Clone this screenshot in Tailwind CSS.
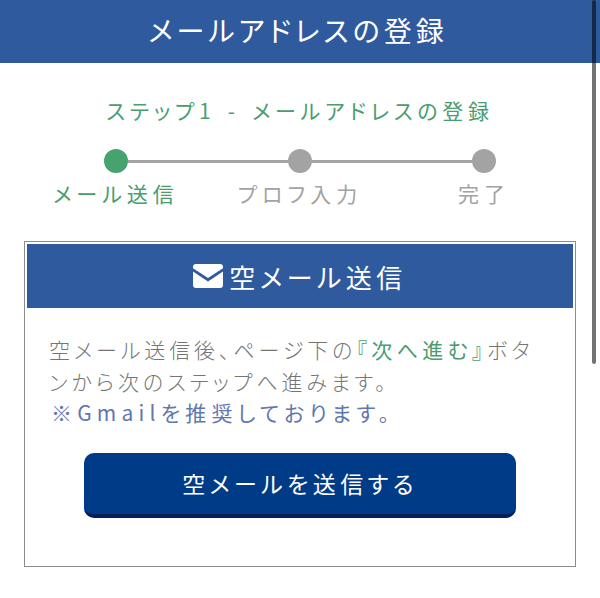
<!doctype html>
<html lang="ja">
	<head>
		<meta charset="UTF-8">
		<meta content="width=device-width, initial-scale=1" name="viewport">
		<title>メールアドレスの登録</title>
		<script src="https://cdn.jsdelivr.net/npm/@tailwindcss/browser@4"></script>
	</head>
	<body class="relative h-[598px] overflow-hidden bg-white font-['Noto_Sans_CJK_JP',sans-serif] [font-feature-settings:'palt']">
		<!-- ヘッダー -->
		<header class="flex h-[63px] items-center justify-center bg-[#2f5a9e] pr-[4px] pb-[3px] text-[28px] font-normal tracking-[4px] text-white">メールアドレスの登録</header>

		<!-- ステップ -->
		<p class="mt-[32px] text-center text-[21px] leading-[30px] font-normal tracking-[4.7px] text-[#4a9d6f] [word-spacing:3px]">ステップ1 - メールアドレスの登録</p>
		<div class="mx-auto mt-[24px] flex h-[24px] w-[392px] items-center">
			<span class="size-[24px] shrink-0 rounded-full bg-[#46a36e]"></span>
			<span class="h-[3px] grow bg-[#a3a3a3]"></span>
			<span class="size-[24px] shrink-0 rounded-full bg-[#a3a3a3]"></span>
			<span class="h-[3px] grow bg-[#a3a3a3]"></span>
			<span class="size-[24px] shrink-0 rounded-full bg-[#a3a3a3]"></span>
		</div>
		<div class="mx-auto mt-[5px] grid w-[552px] grid-cols-3 text-center text-[21px] leading-[30px] tracking-[5px] text-[#a3a3a3]">
			<span class="text-[#4a9d6f]">メール送信</span>
			<span>プロフ入力</span>
			<span>完了</span>
		</div>

		<!-- カード -->
		<section class="mx-auto mt-[33px] h-[326px] w-[552px] border border-[#8c8c8c] px-[2px] pt-[2px]">
			<h2 class="flex h-[64px] items-center justify-center gap-[6px] bg-[#2f5a9e] text-[26px] font-normal tracking-[4.5px] text-white">
				<svg class="h-[24px] w-[30px]" viewBox="0 0 30 24" aria-hidden="true">
					<path fill="#fff" d="M3 0h24a3 3 0 0 1 3 3v1.2L15 14 0 4.200V3a3 3 0 0 1 3-3z"/>
					<path fill="#fff" d="M0 7.600 15 17.400 30 7.600V21a3 3 0 0 1-3 3H3a3 3 0 0 1-3-3z"/>
				</svg>
				<span>空メール送信</span>
			</h2>
			<p class="mt-[26px] px-[22px] text-[21px] leading-[31.5px] font-light tracking-[3.9px] text-[#757575]">
				空メール送信後、ページ下の<span class="font-normal tracking-[4.4px] text-[#4a9d6f]">『次へ進む』</span>ボタンから次のステップへ進みます。<br>
				<span class="ml-[2px] font-normal tracking-[5.2px] text-[#5f78b0]">※Gmailを推奨しております。</span>
			</p>
			<button class="mx-auto mt-[24px] flex h-[65px] w-[432px] items-center justify-center rounded-[10px] border-b-[4px] border-[#001f5c] bg-[#003b87] text-[23px] font-normal tracking-[4.4px] text-white">空メールを送信する</button>
		</section>

		<!-- スクロールバー -->
		<div class="absolute top-0 right-[4px] h-[364px] w-[4px] rounded-full bg-black/55"></div>
	</body>
</html>
